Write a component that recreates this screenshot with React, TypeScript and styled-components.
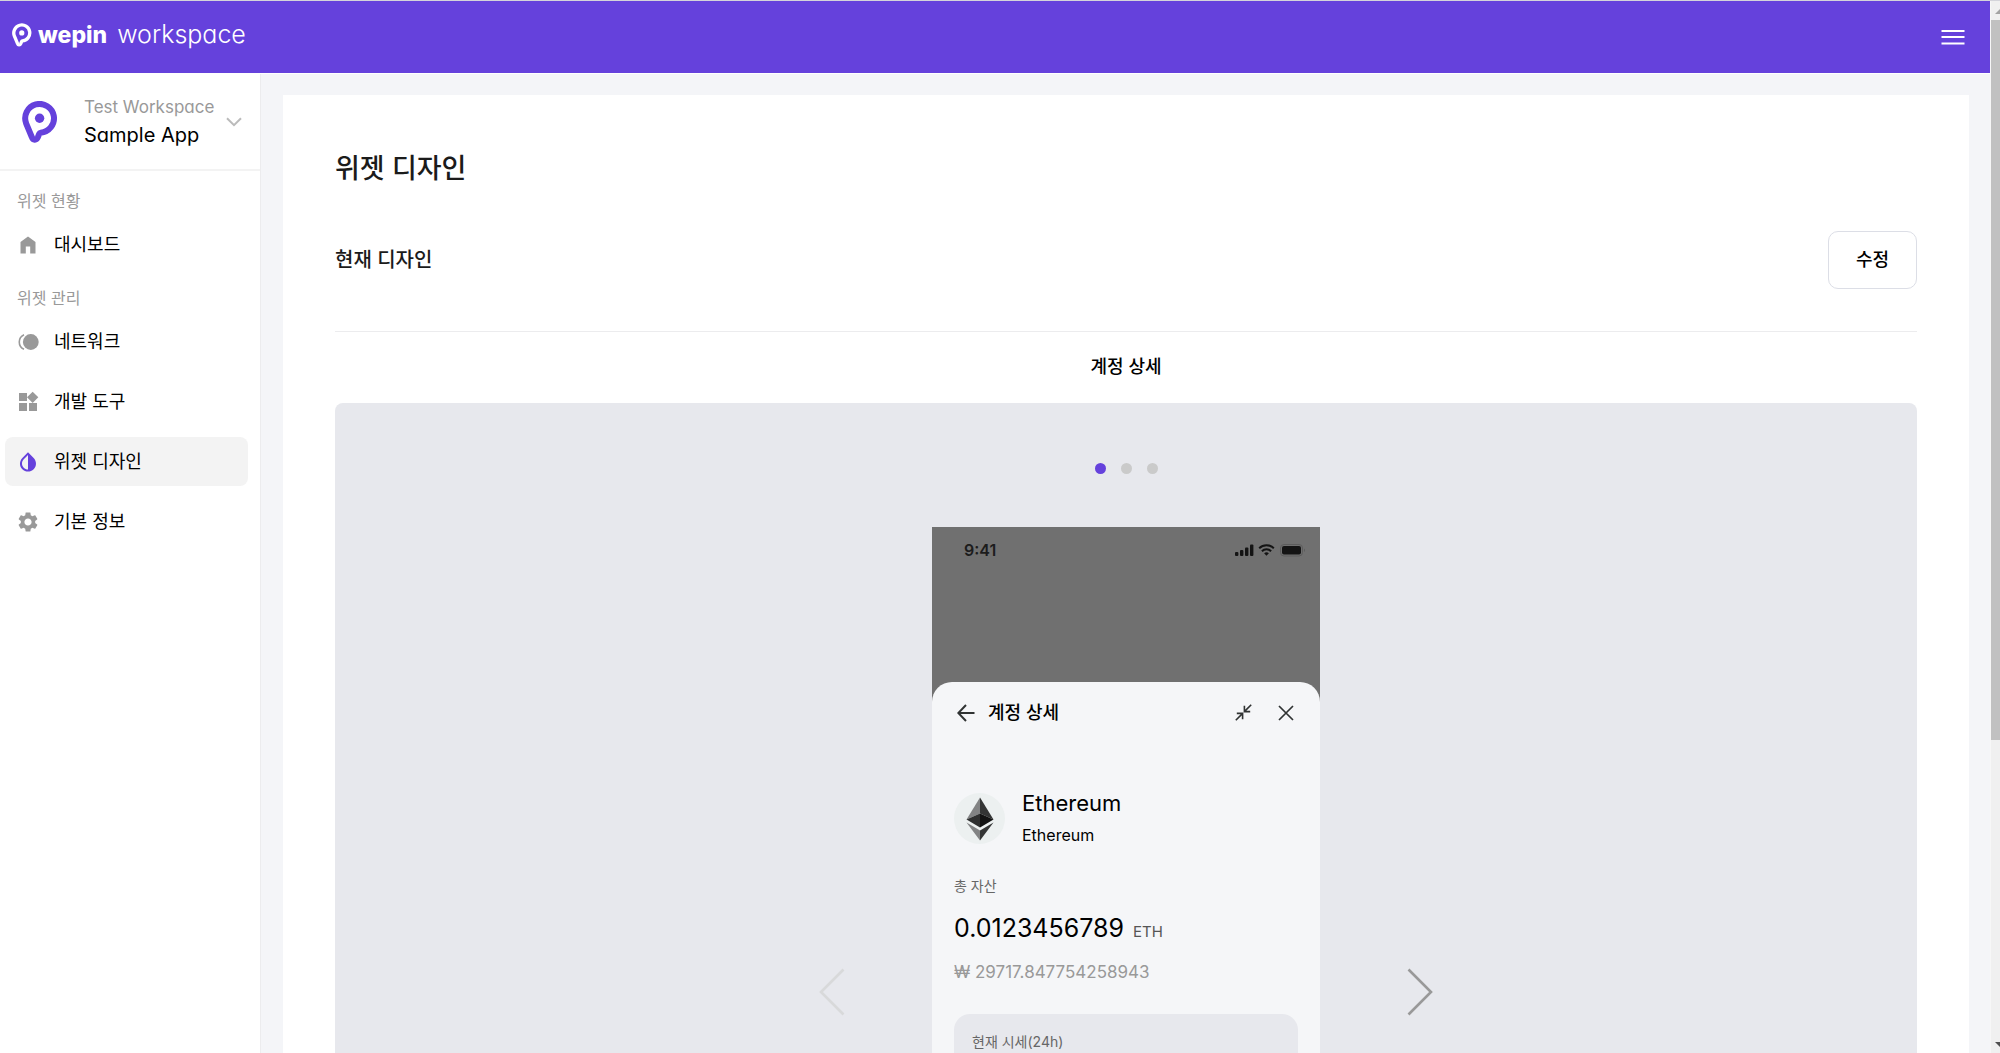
import React from "react";
import styled, { createGlobalStyle } from "styled-components";

const color = {
  purple: "#6541dc",
  ink: "#1b1b1b",
  black: "#000000",
  gray: "#999999",
  mid: "#666666",
  line: "#ececee",
  page: "#f4f5f8",
  panel: "#e7e8ed",
  sheet: "#f5f6f8",
};

const GlobalStyle = createGlobalStyle`
  * { box-sizing: border-box; }
  body {
    margin: 0;
    overflow: hidden;
    font-family: "Inter", "Noto Sans CJK KR", sans-serif;
    font-feature-settings: "cv11";
    color: ${color.black};
    background: #ffffff;
  }
  button {
    font: inherit;
    font-feature-settings: inherit;
    color: inherit;
    padding: 0;
    border: 0;
    background: none;
    cursor: pointer;
  }
  h1, h2, h3, p { margin: 0; }
  svg { display: block; }
`;

const Shell = styled.div`
  display: flex;
  height: 100vh;
  border-top: 1px solid #d4d4da;
`;

const Page = styled.div`
  flex: 1;
  min-width: 0;
  display: flex;
  flex-direction: column;
`;

const Header = styled.header`
  flex: none;
  display: flex;
  align-items: center;
  justify-content: space-between;
  height: 73px;
  padding: 0 25px 0 12px;
  background: ${color.purple};
  border-bottom: 1px solid #ffffff;
  color: #ffffff;
`;

const Brand = styled.a`
  display: flex;
  align-items: center;
  padding-bottom: 4px;
  color: inherit;
  text-decoration: none;
  line-height: 32px;
`;

const BrandBold = styled.span`
  margin-left: 6px;
  font-size: 23px;
  font-weight: 800;
`;

const BrandLight = styled.span`
  margin-left: 10px;
  padding-bottom: 2px;
  font-size: 25px;
  font-weight: 300;
`;

const Body = styled.div`
  flex: 1;
  min-height: 0;
  display: flex;
  overflow: hidden;
`;

const Sidebar = styled.aside`
  flex: none;
  width: 261px;
  background: #ffffff;
  border-right: 1px solid ${color.line};
`;

const AppSwitcher = styled.button`
  display: flex;
  align-items: center;
  width: 100%;
  height: 97px;
  padding: 0 18px 0 22px;
  border-bottom: 2px solid #f3f3f3;
  text-align: left;

  svg:first-child {
    color: ${color.purple};
  }
`;

const AppNames = styled.span`
  flex: 1;
  display: flex;
  flex-direction: column;
  margin-left: 26px;
  padding-bottom: 2px;
  line-height: 28px;
`;

const WorkspaceName = styled.span`
  font-size: 17px;
  color: ${color.gray};
`;

const AppName = styled.span`
  font-size: 20px;
`;

const Nav = styled.nav`
  padding: 15px 12px 0 5px;
`;

const NavLabel = styled.h3`
  margin: 3px 0 7px;
  padding-left: 12px;
  font-size: 16px;
  font-weight: 400;
  line-height: 24px;
  color: ${color.gray};
`;

const NavList = styled.ul`
  display: flex;
  flex-direction: column;
  gap: 11px;
  margin: 0 0 17px;
  padding: 0;
  list-style: none;
`;

const NavLink = styled.a<{ $active?: boolean }>`
  display: flex;
  align-items: center;
  gap: 14px;
  height: 49px;
  padding-left: 11px;
  border-radius: 8px;
  background: ${(p) => (p.$active ? "#f3f3f3" : "transparent")};
  font-size: 18px;
  font-weight: 400;
  line-height: 24px;
  color: ${color.black};
  text-decoration: none;

  svg {
    color: ${(p) => (p.$active ? color.purple : color.gray)};
  }
`;

const Main = styled.main`
  flex: 1;
  min-width: 0;
  padding: 21px 21px 0 22px;
  background: ${color.page};
`;

const Card = styled.section`
  padding: 54px 52px 40px;
  background: #ffffff;
`;

const PageTitle = styled.h1`
  font-size: 27px;
  font-weight: 500;
  line-height: 40px;
  color: ${color.ink};
`;

const SectionRow = styled.div`
  display: flex;
  align-items: center;
  justify-content: space-between;
  margin-top: 42px;
  padding-bottom: 42px;
  border-bottom: 1px solid ${color.line};
`;

const SectionTitle = styled.h2`
  font-size: 20px;
  font-weight: 500;
  line-height: 28px;
  color: ${color.ink};
`;

const EditButton = styled.button`
  width: 89px;
  height: 58px;
  border: 1px solid #dcdee6;
  border-radius: 10px;
  font-size: 18px;
  font-weight: 500;
  line-height: 24px;
`;

const SlideTitle = styled.h3`
  padding: 21px 0 22px;
  font-size: 18px;
  font-weight: 500;
  line-height: 28px;
  text-align: center;
`;

const Preview = styled.div`
  padding: 60px 0 72px;
  border-radius: 8px;
  background: ${color.panel};
`;

const Dots = styled.div`
  display: flex;
  justify-content: center;
  gap: 15px;
`;

const Dot = styled.button<{ $active?: boolean }>`
  width: 11px;
  height: 11px;
  border-radius: 50%;
  background: ${(p) => (p.$active ? color.purple : "#cacaca")};
`;

const Carousel = styled.div`
  display: flex;
  align-items: center;
  justify-content: center;
  gap: 76px;
  margin-top: 53px;
`;

const Arrow = styled.button<{ $disabled?: boolean }>`
  display: grid;
  place-items: center;
  width: 48px;
  height: 64px;
  color: ${(p) => (p.$disabled ? "#d8d9da" : "#999999")};
`;

const Phone = styled.div`
  display: flex;
  flex-direction: column;
  width: 388px;
  min-height: 930px;
  background: #707070;
`;

const StatusBar = styled.div`
  display: flex;
  align-items: center;
  justify-content: space-between;
  height: 45px;
  margin-bottom: 110px;
  padding: 0 14px 0 32px;
  font-size: 16px;
  font-weight: 600;
  line-height: 20px;
  color: #1c1c1c;
`;

const Sheet = styled.div`
  flex: 1;
  padding: 0 22px 24px;
  border-radius: 20px 20px 0 0;
  background: ${color.sheet};
`;

const SheetBar = styled.div`
  display: flex;
  align-items: center;
  height: 61px;
  color: #303333;
`;

const SheetTitle = styled.h3`
  flex: 1;
  margin-left: 10px;
  font-size: 18px;
  font-weight: 500;
  line-height: 28px;
  color: ${color.black};
`;

const IconButton = styled.button<{ $gap?: number }>`
  display: grid;
  place-items: center;
  width: 24px;
  height: 24px;
  margin-left: ${(p) => p.$gap ?? 0}px;
`;

const Coin = styled.div`
  display: flex;
  align-items: center;
  gap: 17px;
  margin-top: 44px;
`;

const CoinNames = styled.div`
  display: flex;
  flex-direction: column;
  gap: 2px;
`;

const CoinName = styled.span`
  font-size: 22px;
  line-height: 32px;
`;

const CoinNetwork = styled.span`
  font-size: 16px;
  line-height: 28px;
`;

const Caption = styled.p`
  font-size: 14px;
  line-height: 20px;
  color: ${color.mid};
`;

const Amount = styled.p`
  display: flex;
  align-items: baseline;
  gap: 9px;
  margin-top: 14px;
  font-size: 25px;
  line-height: 36px;
`;

const Unit = styled.span`
  font-size: 15px;
  color: #555555;
`;

const Fiat = styled.p`
  margin-top: 10px;
  font-size: 17px;
  line-height: 24px;
  color: ${color.gray};
`;

const Total = styled.div`
  margin-top: 27px;
`;

const PriceBox = styled.div`
  min-height: 140px;
  margin-top: 30px;
  padding: 18px;
  border-radius: 16px;
  background: ${color.panel};
`;

const Scrollbar = styled.div`
  flex: none;
  display: flex;
  flex-direction: column;
  width: 10px;
  overflow: hidden;
  background: #f0f0f0;
  border-left: 1px solid #f7f7f7;
`;

const ScrollEnd = styled.div`
  flex: none;
  height: 19px;
  padding: 8px 0 0 4px;
`;

const ScrollTrack = styled.div`
  flex: 1;
`;

const ScrollThumb = styled.div`
  height: 71%;
  background: #c1c1c1;
`;

const PinLogo = ({ width, height }: { width: number; height: number }) => (
  <svg width={width} height={height} viewBox="0 0 36 42" fill="none" aria-hidden="true">
    <path
      d="M18.6 31.7A14.4 14.4 0 1 0 4.2 22.6L9.8 36C11 39.4 14.4 39.6 15.8 36.4L17.2 32.8Q17.6 31.8 18.6 31.7Z"
      stroke="currentColor"
      strokeWidth="6"
      strokeLinejoin="round"
    />
    <circle cx="17.6" cy="17.2" r="4.7" fill="currentColor" />
  </svg>
);

const HomeIcon = () => (
  <svg width="24" height="24" viewBox="0 0 24 24" fill="currentColor" aria-hidden="true">
    <path d="M4.5 20.5V9L12 3.5 19.500 9v11.500h-5.300v-7H9.800v7z" />
  </svg>
);

const NetworkIcon = () => (
  <svg width="24" height="24" viewBox="0 0 24 24" aria-hidden="true">
    <circle cx="14.800" cy="12" r="7.900" fill="currentColor" />
    <path d="M8 4.700A8 8 0 0 0 8 19.300" fill="none" stroke="currentColor" strokeWidth="1.600" />
  </svg>
);

const WidgetsIcon = () => (
  <svg width="24" height="24" viewBox="0 0 24 24" fill="currentColor" aria-hidden="true">
    <path d="M13 13v8h8v-8h-8zM3 21h8v-8H3v8zM3 3v8h8V3H3zm13.660-1.310L11 7.340 16.660 13l5.660-5.660-5.660-5.650z" />
  </svg>
);

const DropIcon = () => (
  <svg width="24" height="24" viewBox="0 0 24 24" fill="currentColor" aria-hidden="true">
    <path d="M17.660 7.930L12 2.270 6.340 7.930c-3.120 3.120-3.120 8.190 0 11.310C7.900 20.800 9.950 21.580 12 21.580s4.100-.780 5.660-2.340c3.120-3.120 3.120-8.190 0-11.310zM12 19.590c-1.600 0-3.110-.620-4.240-1.760C6.620 16.690 6 15.190 6 13.590s.620-3.110 1.760-4.240L12 5.100v14.490z" />
  </svg>
);

const GearIcon = () => (
  <svg width="24" height="24" viewBox="0 0 24 24" fill="currentColor" aria-hidden="true">
    <path d="M19.140 12.940c.040-.300.060-.610.060-.940 0-.320-.020-.640-.070-.940l2.030-1.580c.180-.140.230-.410.120-.610l-1.920-3.320c-.120-.220-.370-.290-.590-.220l-2.390.960c-.500-.380-1.030-.700-1.620-.940l-.360-2.540c-.040-.240-.240-.410-.480-.410h-3.840c-.240 0-.430.170-.470.410l-.360 2.540c-.590.240-1.130.570-1.620.940l-2.390-.960c-.220-.080-.470 0-.590.220L2.740 8.870c-.120.210-.080.470.120.610l2.030 1.580c-.050.300-.090.630-.090.940s.020.640.070.940l-2.030 1.580c-.180.140-.230.410-.120.610l1.920 3.320c.120.220.370.290.590.220l2.390-.960c.500.380 1.030.700 1.620.940l.360 2.540c.050.240.240.410.480.410h3.840c.240 0 .440-.170.470-.410l.360-2.540c.590-.240 1.130-.560 1.620-.940l2.390.960c.220.080.470 0 .590-.220l1.920-3.320c.120-.220.070-.470-.120-.610l-2.010-1.580zM12 15.600c-1.980 0-3.600-1.620-3.600-3.600s1.620-3.600 3.600-3.600 3.600 1.620 3.600 3.600-1.620 3.600-3.600 3.600z" />
  </svg>
);

const MenuIcon = () => (
  <svg width="24" height="18" viewBox="0 0 24 18" stroke="currentColor" strokeWidth="2" aria-hidden="true">
    <path d="M0.500 3H23.500M0.500 9H23.500M0.500 15.500H23.500" />
  </svg>
);

const ChevronDown = () => (
  <svg width="16" height="10" viewBox="0 0 16 10" fill="none" stroke="#bbbbbb" strokeWidth="2" aria-hidden="true">
    <path d="M1 1.200L8 8.200L15 1.200" />
  </svg>
);

const Chevron = ({ d }: { d: string }) => (
  <svg width="26" height="48" viewBox="0 0 26 48" fill="none" stroke="currentColor" strokeWidth="2.600" aria-hidden="true">
    <path d={d} />
  </svg>
);

const StatusIcons = () => (
  <svg width="72" height="14" viewBox="0 0 72 14" aria-hidden="true">
    <g fill="#141414">
      <rect x="1" y="9" width="3.400" height="4" rx="1" />
      <rect x="6" y="7" width="3.400" height="6" rx="1" />
      <rect x="11" y="4.500" width="3.400" height="8.500" rx="1" />
      <rect x="16" y="1.500" width="3.400" height="11.500" rx="1" />
      <path d="M32.500 12.800l-2.400-2.500a3.500 3.500 0 0 1 4.800 0z" />
      <rect x="48" y="3" width="19" height="8.500" rx="2" />
    </g>
    <g fill="none" stroke="#141414" strokeWidth="2">
      <path d="M25.200 5.200a10.500 10.500 0 0 1 14.600 0" />
      <path d="M27.900 8.200a6.600 6.600 0 0 1 9.200 0" />
    </g>
    <rect x="46.500" y="1.500" width="22" height="11.500" rx="3.500" fill="none" stroke="#5c5c5c" />
    <path d="M70 5.500v3.500c1.300-.500 1.300-3 0-3.500z" fill="#5c5c5c" />
  </svg>
);

const BackIcon = () => (
  <svg width="18" height="18" viewBox="0 0 18 18" fill="none" stroke="currentColor" strokeWidth="2" aria-hidden="true">
    <path d="M17.500 9H1.500M9 1L1.300 9L9 17" />
  </svg>
);

const CollapseIcon = () => (
  <svg width="17" height="17" viewBox="0 0 17 17" fill="none" stroke="currentColor" strokeWidth="1.600" aria-hidden="true">
    <path d="M16.200 0.800L9.600 7.400M9.400 1.800V7.600H15.200M0.800 16.200L7.400 9.600M1.800 9.400H7.600V15.200" />
  </svg>
);

const CloseIcon = () => (
  <svg width="16" height="16" viewBox="0 0 16 16" fill="none" stroke="currentColor" strokeWidth="1.700" aria-hidden="true">
    <path d="M1 1L15 15M15 1L1 15" />
  </svg>
);

const EthereumIcon = () => (
  <svg width="51" height="51" viewBox="0 0 51 51" aria-hidden="true">
    <circle cx="25.500" cy="25.500" r="25.500" fill="#ecf0f0" />
    <path d="M26 4.500L12.500 26.500L26 20.500Z" fill="#828384" />
    <path d="M26 4.500L39.500 26.500L26 20.500Z" fill="#343535" />
    <path d="M26 20.500L12.500 26.500L26 34.500Z" fill="#2f3030" />
    <path d="M26 20.500L39.500 26.500L26 34.500Z" fill="#131313" />
    <path d="M12.500 29.500L26 37.500V47.500Z" fill="#828384" />
    <path d="M39.500 29.500L26 37.500V47.500Z" fill="#343535" />
  </svg>
);

const navGroups = [
  { label: "위젯 현황", items: [{ text: "대시보드", Icon: HomeIcon }] },
  {
    label: "위젯 관리",
    items: [
      { text: "네트워크", Icon: NetworkIcon },
      { text: "개발 도구", Icon: WidgetsIcon },
      { text: "위젯 디자인", Icon: DropIcon, active: true },
      { text: "기본 정보", Icon: GearIcon },
    ],
  },
];

export default function App() {
  return (
    <>
      <GlobalStyle />
      <Shell>
        <Page>
          <Header>
            <Brand href="#">
              <PinLogo width={20} height={24} />
              <BrandBold>wepin</BrandBold>
              <BrandLight>workspace</BrandLight>
            </Brand>
            <button type="button" aria-label="메뉴">
              <MenuIcon />
            </button>
          </Header>
          <Body>
            <Sidebar>
              <AppSwitcher type="button">
                <PinLogo width={36} height={42} />
                <AppNames>
                  <WorkspaceName>Test Workspace</WorkspaceName>
                  <AppName>Sample App</AppName>
                </AppNames>
                <ChevronDown />
              </AppSwitcher>
              <Nav>
                {navGroups.map((group) => (
                  <React.Fragment key={group.label}>
                    <NavLabel>{group.label}</NavLabel>
                    <NavList>
                      {group.items.map(({ text, Icon, active }: any) => (
                        <li key={text}>
                          <NavLink href="#" $active={active} aria-current={active ? "page" : undefined}>
                            <Icon />
                            {text}
                          </NavLink>
                        </li>
                      ))}
                    </NavList>
                  </React.Fragment>
                ))}
              </Nav>
            </Sidebar>
            <Main>
              <Card>
                <PageTitle>위젯 디자인</PageTitle>
                <SectionRow>
                  <SectionTitle>현재 디자인</SectionTitle>
                  <EditButton type="button">수정</EditButton>
                </SectionRow>
                <SlideTitle>계정 상세</SlideTitle>
                <Preview>
                  <Dots>
                    <Dot type="button" $active aria-label="1" />
                    <Dot type="button" aria-label="2" />
                    <Dot type="button" aria-label="3" />
                  </Dots>
                  <Carousel>
                    <Arrow type="button" $disabled aria-label="이전">
                      <Chevron d="M24.500 1.500L2 24L24.500 46.500" />
                    </Arrow>
                    <Phone>
                      <StatusBar>
                        9:41
                        <StatusIcons />
                      </StatusBar>
                      <Sheet>
                        <SheetBar>
                          <IconButton type="button" aria-label="뒤로">
                            <BackIcon />
                          </IconButton>
                          <SheetTitle>계정 상세</SheetTitle>
                          <IconButton type="button" aria-label="축소">
                            <CollapseIcon />
                          </IconButton>
                          <IconButton type="button" $gap={19} aria-label="닫기">
                            <CloseIcon />
                          </IconButton>
                        </SheetBar>
                        <Coin>
                          <EthereumIcon />
                          <CoinNames>
                            <CoinName>Ethereum</CoinName>
                            <CoinNetwork>Ethereum</CoinNetwork>
                          </CoinNames>
                        </Coin>
                        <Total>
                          <Caption>총 자산</Caption>
                          <Amount>
                            0.0123456789 <Unit>ETH</Unit>
                          </Amount>
                          <Fiat>₩ 29717.847754258943</Fiat>
                        </Total>
                        <PriceBox>
                          <Caption>현재 시세(24h)</Caption>
                        </PriceBox>
                      </Sheet>
                    </Phone>
                    <Arrow type="button" aria-label="다음">
                      <Chevron d="M1.500 1.500L24 24L1.500 46.500" />
                    </Arrow>
                  </Carousel>
                </Preview>
              </Card>
            </Main>
          </Body>
        </Page>
        <Scrollbar aria-hidden="true">
          <ScrollEnd>
            <svg width="10" height="6" viewBox="0 0 10 6" fill="#a3a3a3">
              <path d="M0 5L5 0L10 5Z" />
            </svg>
          </ScrollEnd>
          <ScrollTrack>
            <ScrollThumb />
          </ScrollTrack>
          <ScrollEnd>
            <svg width="10" height="6" viewBox="0 0 10 6" fill="#505050">
              <path d="M0 0L5 5L10 0Z" />
            </svg>
          </ScrollEnd>
        </Scrollbar>
      </Shell>
    </>
  );
}
